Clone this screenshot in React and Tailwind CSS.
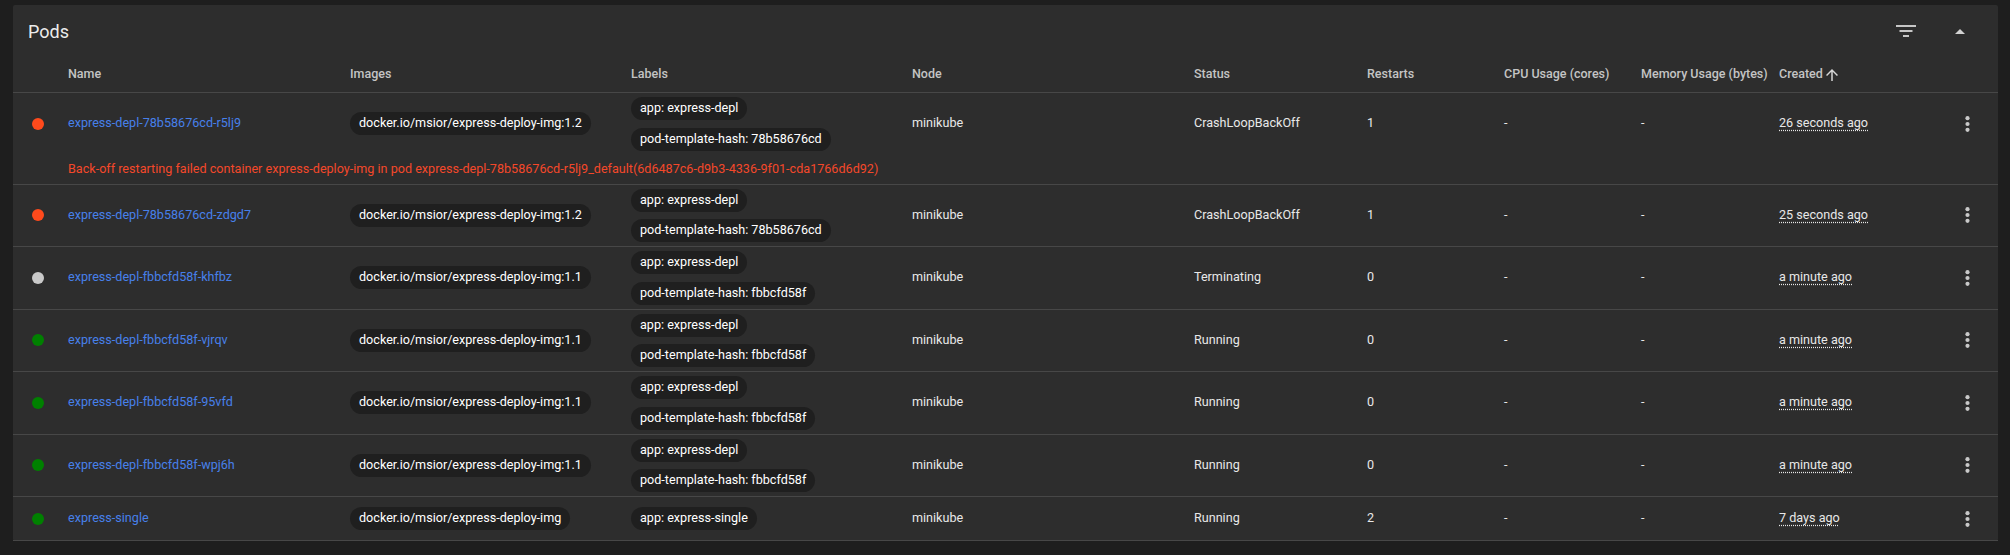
const pods = [
  {
    status: 'error', name: 'express-depl-78b58676cd-r5lj9', image: 'docker.io/msior/express-deploy-img:1.2',
    labels: ['app: express-depl', 'pod-template-hash: 78b58676cd'], phase: 'CrashLoopBackOff', restarts: 1, created: '26 seconds ago',
    message: 'Back-off restarting failed container express-deploy-img in pod express-depl-78b58676cd-r5lj9_default(6d6487c6-d9b3-4336-9f01-cda1766d6d92)',
  },
  {
    status: 'error', name: 'express-depl-78b58676cd-zdgd7', image: 'docker.io/msior/express-deploy-img:1.2',
    labels: ['app: express-depl', 'pod-template-hash: 78b58676cd'], phase: 'CrashLoopBackOff', restarts: 1, created: '25 seconds ago',
  },
  {
    status: 'pending', name: 'express-depl-fbbcfd58f-khfbz', image: 'docker.io/msior/express-deploy-img:1.1',
    labels: ['app: express-depl', 'pod-template-hash: fbbcfd58f'], phase: 'Terminating', restarts: 0, created: 'a minute ago',
  },
  {
    status: 'ok', name: 'express-depl-fbbcfd58f-vjrqv', image: 'docker.io/msior/express-deploy-img:1.1',
    labels: ['app: express-depl', 'pod-template-hash: fbbcfd58f'], phase: 'Running', restarts: 0, created: 'a minute ago',
  },
  {
    status: 'ok', name: 'express-depl-fbbcfd58f-95vfd', image: 'docker.io/msior/express-deploy-img:1.1',
    labels: ['app: express-depl', 'pod-template-hash: fbbcfd58f'], phase: 'Running', restarts: 0, created: 'a minute ago',
  },
  {
    status: 'ok', name: 'express-depl-fbbcfd58f-wpj6h', image: 'docker.io/msior/express-deploy-img:1.1',
    labels: ['app: express-depl', 'pod-template-hash: fbbcfd58f'], phase: 'Running', restarts: 0, created: 'a minute ago',
  },
  {
    status: 'ok', name: 'express-single', image: 'docker.io/msior/express-deploy-img',
    labels: ['app: express-single'], phase: 'Running', restarts: 2, created: '7 days ago',
  },
];

const dotColors = { error: 'bg-[#ff4a1c]', pending: 'bg-[#c9c9c9]', ok: 'bg-[#008000]' };

const cols = 'grid grid-cols-[55px_282px_281px_281px_282px_173px_137px_137px_138px_157px_62px] items-center';

function Chip({ children }) {
  return (
    <span className="inline-flex h-[23px] items-center rounded-full bg-[#1f1f1f] px-[9px] text-white whitespace-nowrap">
      {children}
    </span>
  );
}

function FilterIcon() {
  return (
    <svg width="20" height="13" viewBox="0 0 20 13" fill="#c6c6c6">
      <rect x="0" y="0" width="20" height="2" />
      <rect x="3.5" y="5" width="13" height="2" />
      <rect x="7" y="10" width="6" height="2" />
    </svg>
  );
}

function Kebab() {
  return (
    <svg width="5" height="16" viewBox="0 0 5 16" fill="#c9c9c9">
      <circle cx="2.5" cy="2.2" r="2.1" />
      <circle cx="2.5" cy="8" r="2.1" />
      <circle cx="2.5" cy="13.8" r="2.1" />
    </svg>
  );
}

export default function App() {
  return (
    <div className="h-[555px] w-full bg-[#1e1e1e] pt-[5px] pl-[13px] pr-[12px] font-[Roboto,sans-serif] text-[12.6px] text-[#e8e8e8]">
      <div className="rounded-[2px] bg-[#2d2d2d]">
        <div className="flex h-[52px] items-center pl-[15px] pr-[11px]">
          <h1 className="text-[18px] text-[#ececec]">Pods</h1>
          <div className="ml-auto flex">
            <button className="flex h-[40px] w-[54px] items-center justify-center">
              <FilterIcon />
            </button>
            <button className="flex h-[40px] w-[54px] items-center justify-center">
              <svg width="10" height="5" viewBox="0 0 10 5" fill="#d2d2d2"><path d="M0 5L5 0l5 5z" /></svg>
            </button>
          </div>
        </div>

        <div className={`${cols} h-[36px] border-b border-[#474747] text-[12.5px] font-medium text-[#c4c4c4]`}>
          <div />
          <div>Name</div>
          <div>Images</div>
          <div>Labels</div>
          <div>Node</div>
          <div>Status</div>
          <div>Restarts</div>
          <div>CPU Usage (cores)</div>
          <div>Memory Usage (bytes)</div>
          <div className="flex items-center gap-[3px]">
            Created
            <svg width="12" height="12" viewBox="4 4 16 16" fill="#d6d6d6">
              <path d="M4 12l1.41 1.41L11 7.83V20h2V7.83l5.58 5.59L20 12l-8-8-8 8z" />
            </svg>
          </div>
          <div />
        </div>

        {pods.map(p => (
          <div key={p.name} className="border-b border-[#474747]">
            <div className={`${cols} min-h-[43px]`}>
              <div className="pl-[19px]">
                <span className={`block h-[12px] w-[12px] rounded-full ${dotColors[p.status]}`} />
              </div>
              <div>
                <a className="text-[#4780ea]">{p.name}</a>
              </div>
              <div>
                <Chip>{p.image}</Chip>
              </div>
              <div className="flex flex-col items-start gap-[7.5px] py-[4px]">
                {p.labels.map(l => <Chip key={l}>{l}</Chip>)}
              </div>
              <div>minikube</div>
              <div>{p.phase}</div>
              <div>{p.restarts}</div>
              <div>-</div>
              <div>-</div>
              <div>
                <span className="underline decoration-dotted underline-offset-[3px]">{p.created}</span>
              </div>
              <div className="flex justify-center">
                <Kebab />
              </div>
            </div>
            {p.message && (
              <div className="flex h-[29px] items-center pl-[55px] text-[#f4482a]">{p.message}</div>
            )}
          </div>
        ))}
      </div>
    </div>
  );
}
